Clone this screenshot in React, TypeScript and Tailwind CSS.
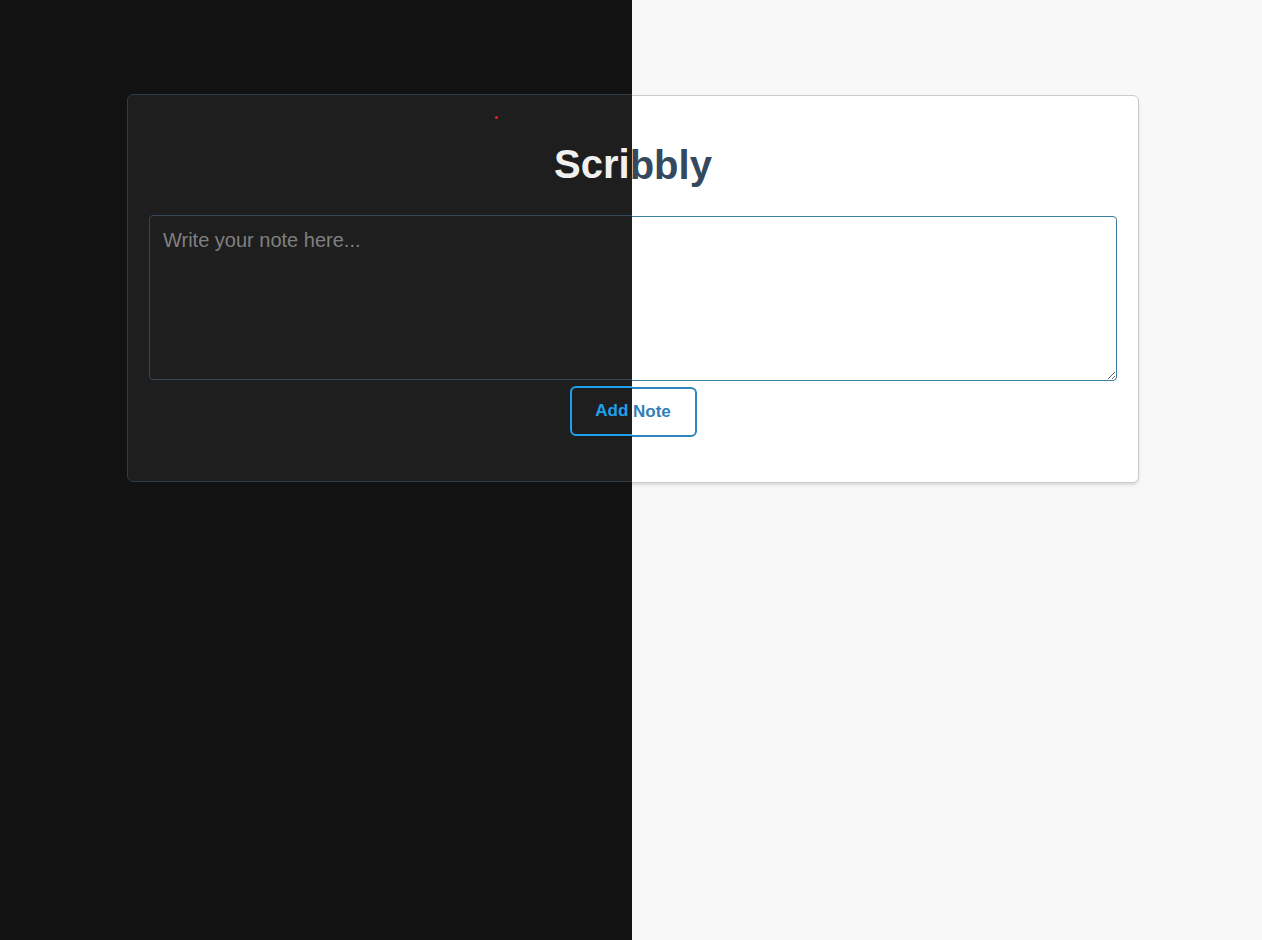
import { useState } from 'react';

type Theme = 'light' | 'dark';

function NoteCard({ theme, note, setNote }: { theme: Theme; note: string; setNote: (v: string) => void }) {
    const dark = theme === 'dark';
    return (
        <div className={`min-h-[940px] w-[1262px] ${dark ? 'bg-[#121212] pt-[94px]' : 'bg-[#f8f8f8] pt-[95px]'}`}>
            <div
                className={`relative ml-[127px] w-[1012px] rounded-md border px-[21px] pt-5 pb-5 ${
                    dark ? 'border-[#2e3a46] bg-[#1e1e1e]' : 'border-[#cccccc] bg-white shadow-[0_2px_3px_rgba(0,0,0,0.12)]'
                }`}
            >
                {dark && <span className="absolute left-[367px] top-[21px] h-[3px] w-[3px] rounded-full bg-[#e0262f]" />}
                <h1
                    className={`mt-[26px] mb-[28px] text-center text-[40px] leading-[46px] font-bold ${
                        dark ? 'text-[#f0f0f0]' : 'text-[#34495e]'
                    }`}
                >
                    Scribbly
                </h1>
                <textarea
                    value={note}
                    onChange={(e) => setNote(e.target.value)}
                    placeholder="Write your note here..."
                    className={`block h-[165px] w-full rounded-[4px] border px-[13px] py-[12px] text-[20px] leading-[24px] outline-none ${
                        dark
                            ? 'border-[#33475b] bg-[#1e1e1e] text-[#eeeeee] placeholder:text-[#808080]'
                            : 'border-[#3b7ea1] bg-white text-[#333333] placeholder:text-[#8a8a8a]'
                    }`}
                />
                <div className="mt-[6px] mb-[25px] flex justify-center">
                    <button
                        className={`h-[50px] w-[127px] rounded-md border-2 bg-transparent text-[17px] font-bold ${
                            dark ? 'border-[#1da1ec] text-[#1da1ec]' : 'border-[#2f86c0] text-[#2f7fb8]'
                        }`}
                    >
                        Add Note
                    </button>
                </div>
            </div>
        </div>
    );
}

export default function App() {
    const [note, setNote] = useState('');
    return (
        <div className="relative h-[940px] w-[1262px] overflow-hidden font-['Liberation_Sans',Arial,sans-serif]">
            <NoteCard theme="light" note={note} setNote={setNote} />
            {/* dark half, clipped to the left side */}
            <div className="absolute inset-y-0 left-0 w-[632px] overflow-hidden">
                <NoteCard theme="dark" note={note} setNote={setNote} />
            </div>
        </div>
    );
}
